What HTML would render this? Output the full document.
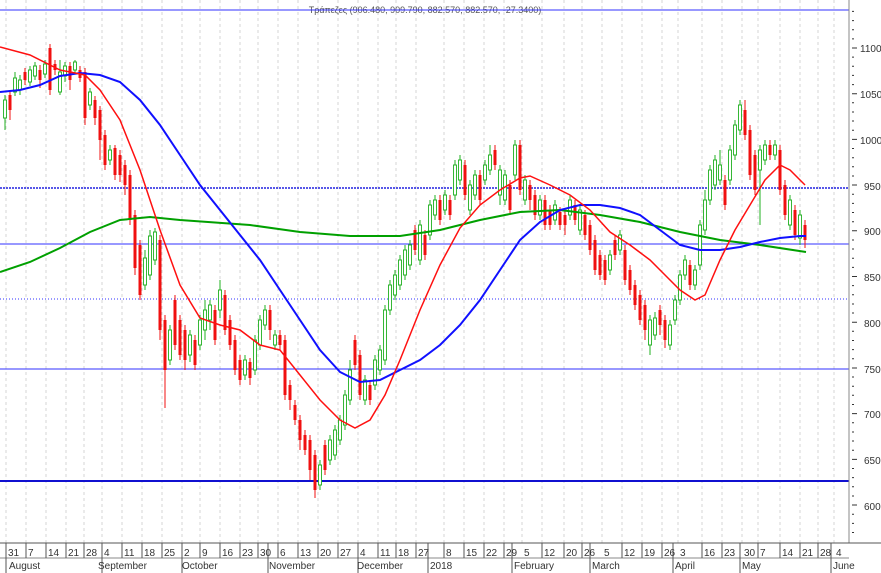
<!DOCTYPE html>
<html><head><meta charset="utf-8"><style>
html,body{margin:0;padding:0;background:#fff;}
svg{display:block;font-family:"Liberation Sans","DejaVu Sans",sans-serif;}
</style></head><body>
<svg width="881" height="573" viewBox="0 0 881 573" xmlns="http://www.w3.org/2000/svg">
<rect width="881" height="573" fill="#fff"/>
<path stroke="#d4d4d4" stroke-dasharray="3,3" stroke-width="1" fill="none" d="M6 0V543M26 0V543M46 0V543M66 0V543M84 0V543M102 0V543M122 0V543M142 0V543M162 0V543M182 0V543M200 0V543M220 0V543M240 0V543M258 0V543M278 0V543M298 0V543M318 0V543M338 0V543M358 0V543M378 0V543M396 0V543M416 0V543M444 0V543M464 0V543M484 0V543M504 0V543M522 0V543M542 0V543M564 0V543M582 0V543M602 0V543M622 0V543M642 0V543M662 0V543M678 0V543M702 0V543M722 0V543M742 0V543M758 0V543M780 0V543M800 0V543M818 0V543M834 0V543"/>
<text x="425" y="13" font-size="9" fill="#555" text-anchor="middle">Τράπεζες (906.480, 909.790, 882.570, 882.570, -27.3400)</text>
<line x1="0" y1="10" x2="849" y2="10" stroke="#3030ff" stroke-width="1"/>
<line x1="0" y1="188" x2="849" y2="188" stroke="#2020e0" stroke-width="1.5" stroke-dasharray="2,1"/>
<line x1="0" y1="244" x2="849" y2="244" stroke="#3030ff" stroke-width="1"/>
<line x1="0" y1="299" x2="849" y2="299" stroke="#3030ff" stroke-width="1" stroke-dasharray="1,2"/>
<line x1="0" y1="369" x2="849" y2="369" stroke="#3030ff" stroke-width="1"/>
<line x1="0" y1="481" x2="849" y2="481" stroke="#1010d0" stroke-width="2"/>
<path stroke="#f01010" stroke-width="1" fill="none" d="M10 90V120M25 68V85M40 65V88M50 44V95M55 60V75M70 62V90M80 66V82M85 68V125M95 96V125M100 106V160M105 130V170M115 145V180M120 150V182M125 160V195M130 170V225M135 210V275M140 240V300M160 235V340M165 315V408M175 295V350M180 315V360M185 325V370M195 335V370M215 305V345M225 290V335M230 315V350M235 335V375M240 355V385M250 358V385M270 305V340M280 330V350M285 335V400M290 380V410M295 400V425M300 415V450M305 430V455M310 435V480M315 450V498M325 440V475M355 335V370M360 350V400M370 380V405M415 225V255M425 230V260M440 195V225M450 195V220M465 160V200M480 170V205M495 145V170M510 180V215M520 140V195M530 180V210M535 190V220M545 195V230M550 205V230M560 207V230M565 210V235M575 200V225M585 210V240M590 220V255M595 235V275M600 250V280M605 255V285M615 235V260M625 245V285M630 265V295M635 280V310M640 290V325M645 300V340M660 305V335M665 315V348M690 260V290M725 175V210M745 100V140M750 125V180M755 150V195M770 140V160M780 145V195M785 180V220M795 205V240M805 220V248"/>
<path fill="#f01010" d="M8.5 95h3V110h-3ZM23.5 72h3V80h-3ZM38.5 70h3V80h-3ZM48.5 48h3V90h-3ZM53.5 64h3V70h-3ZM68.5 66h3V80h-3ZM78.5 70h3V78h-3ZM83.5 72h3V118h-3ZM93.5 100h3V118h-3ZM98.5 110h3V140h-3ZM103.5 135h3V165h-3ZM113.5 148h3V175h-3ZM118.5 155h3V175h-3ZM123.5 165h3V185h-3ZM128.5 175h3V220h-3ZM133.5 215h3V268h-3ZM138.5 245h3V295h-3ZM158.5 240h3V330h-3ZM163.5 320h3V370h-3ZM173.5 300h3V345h-3ZM178.5 320h3V355h-3ZM183.5 330h3V360h-3ZM193.5 340h3V365h-3ZM213.5 310h3V340h-3ZM223.5 295h3V330h-3ZM228.5 320h3V345h-3ZM233.5 340h3V370h-3ZM238.5 360h3V380h-3ZM248.5 362h3V378h-3ZM268.5 310h3V330h-3ZM278.5 335h3V345h-3ZM283.5 340h3V395h-3ZM288.5 385h3V400h-3ZM293.5 405h3V420h-3ZM298.5 420h3V440h-3ZM303.5 435h3V450h-3ZM308.5 440h3V470h-3ZM313.5 455h3V490h-3ZM323.5 445h3V470h-3ZM353.5 340h3V365h-3ZM358.5 355h3V395h-3ZM368.5 385h3V400h-3ZM413.5 230h3V250h-3ZM423.5 235h3V255h-3ZM438.5 200h3V220h-3ZM448.5 200h3V215h-3ZM463.5 165h3V195h-3ZM478.5 175h3V200h-3ZM493.5 150h3V165h-3ZM508.5 185h3V210h-3ZM518.5 145h3V190h-3ZM528.5 185h3V200h-3ZM533.5 195h3V215h-3ZM543.5 200h3V225h-3ZM548.5 210h3V225h-3ZM558.5 212h3V225h-3ZM563.5 215h3V225h-3ZM573.5 205h3V220h-3ZM583.5 215h3V235h-3ZM588.5 225h3V250h-3ZM593.5 240h3V270h-3ZM598.5 255h3V275h-3ZM603.5 260h3V280h-3ZM613.5 240h3V255h-3ZM623.5 250h3V280h-3ZM628.5 270h3V290h-3ZM633.5 285h3V305h-3ZM638.5 295h3V320h-3ZM643.5 305h3V330h-3ZM658.5 310h3V325h-3ZM663.5 320h3V340h-3ZM688.5 265h3V285h-3ZM723.5 180h3V205h-3ZM743.5 110h3V135h-3ZM748.5 130h3V175h-3ZM753.5 155h3V190h-3ZM768.5 145h3V155h-3ZM778.5 150h3V190h-3ZM783.5 185h3V215h-3ZM793.5 210h3V235h-3ZM803.5 225h3V240h-3Z"/>
<path stroke="#20b020" stroke-width="1" fill="none" d="M5 95V130M15 72V96M20 75V95M30 66V86M35 62V80M45 60V78M60 60V95M65 62V82M75 60V74M90 88V110M110 145V165M145 250V290M150 230V280M155 228V265M170 325V365M190 330V362M200 315V350M205 300V340M210 300V330M220 280V318M245 355V380M255 335V375M260 315V350M265 305V330M275 330V350M320 460V490M330 435V465M335 425V460M340 415V445M345 390V430M350 360V405M365 375V405M375 355V390M380 345V375M385 305V365M390 280V315M395 270V300M400 255V290M405 245V280M410 240V270M420 220V265M430 200V240M435 195V220M445 190V215M455 160V200M460 155V185M470 180V215M475 170V200M485 160V185M490 145V175M500 165V205M505 170V205M515 140V180M525 175V205M540 195V220M555 200V225M570 195V220M580 205V235M610 250V275M620 230V255M650 315V355M655 312V340M670 320V350M675 295V325M680 270V305M685 255V280M695 265V290M700 220V270M705 190V235M710 165V205M715 155V190M720 150V185M730 145V185M735 120V160M740 100V135M760 145V225M765 140V165M775 140V160M790 195V230M800 210V245"/>
<path fill="#fff" stroke="#20b020" stroke-width="0.9" d="M3.5 100h3V118h-3ZM13.5 78h3V92h-3ZM18.5 80h3V90h-3ZM28.5 70h3V82h-3ZM33.5 66h3V76h-3ZM43.5 64h3V74h-3ZM58.5 72h3V92h-3ZM63.5 66h3V76h-3ZM73.5 62h3V70h-3ZM88.5 92h3V105h-3ZM108.5 150h3V160h-3ZM143.5 258h3V285h-3ZM148.5 236h3V275h-3ZM153.5 232h3V260h-3ZM168.5 330h3V360h-3ZM188.5 335h3V355h-3ZM198.5 320h3V345h-3ZM203.5 310h3V330h-3ZM208.5 305h3V320h-3ZM218.5 290h3V310h-3ZM243.5 360h3V375h-3ZM253.5 340h3V370h-3ZM258.5 320h3V345h-3ZM263.5 310h3V325h-3ZM273.5 335h3V345h-3ZM318.5 465h3V485h-3ZM328.5 440h3V460h-3ZM333.5 430h3V455h-3ZM338.5 420h3V440h-3ZM343.5 395h3V425h-3ZM348.5 370h3V400h-3ZM363.5 380h3V400h-3ZM373.5 360h3V385h-3ZM378.5 350h3V370h-3ZM383.5 310h3V360h-3ZM388.5 285h3V310h-3ZM393.5 275h3V295h-3ZM398.5 260h3V285h-3ZM403.5 250h3V275h-3ZM408.5 245h3V265h-3ZM418.5 225h3V260h-3ZM428.5 205h3V235h-3ZM433.5 200h3V215h-3ZM443.5 195h3V210h-3ZM453.5 165h3V195h-3ZM458.5 160h3V180h-3ZM468.5 185h3V210h-3ZM473.5 175h3V195h-3ZM483.5 165h3V180h-3ZM488.5 155h3V170h-3ZM498.5 170h3V195h-3ZM503.5 175h3V200h-3ZM513.5 145h3V175h-3ZM523.5 180h3V200h-3ZM538.5 200h3V215h-3ZM553.5 205h3V220h-3ZM568.5 200h3V215h-3ZM578.5 210h3V230h-3ZM608.5 255h3V270h-3ZM618.5 235h3V250h-3ZM648.5 320h3V345h-3ZM653.5 318h3V335h-3ZM668.5 325h3V345h-3ZM673.5 300h3V320h-3ZM678.5 275h3V300h-3ZM683.5 260h3V275h-3ZM693.5 270h3V285h-3ZM698.5 225h3V265h-3ZM703.5 200h3V230h-3ZM708.5 170h3V200h-3ZM713.5 160h3V185h-3ZM718.5 165h3V180h-3ZM728.5 150h3V180h-3ZM733.5 125h3V155h-3ZM738.5 105h3V130h-3ZM758.5 150h3V170h-3ZM763.5 145h3V160h-3ZM773.5 145h3V155h-3ZM788.5 200h3V225h-3ZM798.5 215h3V238h-3Z"/>
<polyline fill="none" stroke="#00a000" stroke-width="2" points="0,272 30,262 60,248 90,232 120,220 150,217 180,220 250,225 300,232 350,236 400,236 440,230 480,220 520,212 560,210 600,215 640,222 680,232 720,240 760,245 806,252"/>
<polyline fill="none" stroke="#1010ff" stroke-width="2" points="0,92 20,90 40,85 60,76 80,73 100,75 120,82 140,100 160,125 180,155 200,185 220,210 240,235 260,260 280,290 300,320 320,350 340,372 360,382 380,380 400,370 420,360 440,345 460,325 480,300 500,270 520,240 540,222 560,210 580,205 600,205 620,208 640,215 660,230 680,245 700,250 720,250 740,247 760,242 780,238 800,236 806,236"/>
<polyline fill="none" stroke="#ff1010" stroke-width="1.5" points="0,47 30,55 60,70 85,75 100,90 120,120 140,170 160,230 180,285 200,318 220,325 240,330 260,345 280,350 300,375 320,400 340,420 355,428 370,420 385,395 400,360 420,310 440,265 460,228 480,205 500,190 520,178 530,176 550,185 570,195 590,210 610,232 630,245 650,260 665,275 680,290 695,300 705,295 720,260 735,230 750,205 765,180 780,165 790,170 805,185"/>
<line x1="849" y1="0" x2="849" y2="543" stroke="#888" stroke-width="1"/>
<line x1="0" y1="543" x2="881" y2="543" stroke="#555" stroke-width="1"/>
<line x1="0" y1="558" x2="849" y2="558" stroke="#888" stroke-width="1"/>
<path stroke="#333" stroke-width="1" fill="none" d="M852 11.4h2M852 20.6h2M852 29.7h2M852 38.9h2M852 48h5M852 57.1h2M852 66.3h2M852 75.4h2M852 84.6h2M852 93.7h5M852 102.8h2M852 112h2M852 121h2M852 130.3h2M852 139.4h5M852 148.5h2M852 157.7h2M852 166.8h2M852 176h2M852 185h5M852 194.2h2M852 203.4h2M852 212.5h2M852 221.7h2M852 230.8h5M852 240h2M852 249h2M852 258.2h2M852 267.4h2M852 276.5h5M852 285.6h2M852 294.8h2M852 304h2M852 313h2M852 322.2h5M852 331.3h2M852 340.5h2M852 349.6h2M852 358.8h2M852 368h5M852 377h2M852 386.2h2M852 395.3h2M852 404.5h2M852 413.6h5M852 422.7h2M852 432h2M852 441h2M852 450.2h2M852 459.4h5M852 468.5h2M852 477.6h2M852 486.8h2M852 496h2M852 505h5M852 514.2h2M852 523.4h2M852 532.5h2"/>
<path stroke="#555" stroke-width="1" fill="none" d="M6 543V573M102 543V573M182 543V573M268 543V573M358 543V573M428 543V573M512 543V573M590 543V573M673 543V573M740 543V573M831 543V573M6 543V558M26 543V558M46 543V558M66 543V558M84 543V558M122 543V558M142 543V558M162 543V558M200 543V558M220 543V558M240 543V558M258 543V558M278 543V558M298 543V558M318 543V558M338 543V558M378 543V558M396 543V558M416 543V558M444 543V558M464 543V558M484 543V558M504 543V558M542 543V558M564 543V558M582 543V558M622 543V558M642 543V558M662 543V558M702 543V558M722 543V558M758 543V558M780 543V558M800 543V558M818 543V558"/>
<g font-size="10" fill="#333">
<text x="860" y="52">1100</text><text x="860" y="98">1050</text><text x="860" y="144">1000</text>
<text x="864" y="190">950</text><text x="864" y="235">900</text><text x="864" y="281">850</text>
<text x="864" y="327">800</text><text x="864" y="373">750</text><text x="864" y="418">700</text>
<text x="864" y="464">650</text><text x="864" y="510">600</text>
</g>
<g font-size="10" fill="#333">
<text x="8" y="556">31</text><text x="28" y="556">7</text><text x="48" y="556">14</text><text x="68" y="556">21</text><text x="86" y="556">28</text><text x="104" y="556">4</text><text x="124" y="556">11</text><text x="144" y="556">18</text><text x="164" y="556">25</text><text x="184" y="556">2</text><text x="202" y="556">9</text><text x="222" y="556">16</text><text x="242" y="556">23</text><text x="260" y="556">30</text><text x="280" y="556">6</text><text x="300" y="556">13</text><text x="320" y="556">20</text><text x="340" y="556">27</text><text x="360" y="556">4</text><text x="380" y="556">11</text><text x="398" y="556">18</text><text x="418" y="556">27</text><text x="446" y="556">8</text><text x="466" y="556">15</text><text x="486" y="556">22</text><text x="506" y="556">29</text><text x="524" y="556">5</text><text x="544" y="556">12</text><text x="566" y="556">20</text><text x="584" y="556">26</text><text x="604" y="556">5</text><text x="624" y="556">12</text><text x="644" y="556">19</text><text x="664" y="556">26</text><text x="680" y="556">3</text><text x="704" y="556">16</text><text x="724" y="556">23</text><text x="744" y="556">30</text><text x="760" y="556">7</text><text x="782" y="556">14</text><text x="802" y="556">21</text><text x="820" y="556">28</text><text x="836" y="556">4</text>
</g>
<g font-size="10" fill="#333">
<text x="9" y="569">August</text><text x="98" y="569">September</text><text x="182" y="569">October</text>
<text x="269" y="569">November</text><text x="357" y="569">December</text><text x="430" y="569">2018</text>
<text x="514" y="569">February</text><text x="592" y="569">March</text><text x="675" y="569">April</text>
<text x="742" y="569">May</text><text x="833" y="569">June</text>
</g>
</svg>
</body></html>
